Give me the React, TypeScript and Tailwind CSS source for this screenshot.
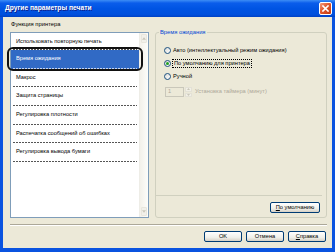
import React from "react";

const items = [
  "Использовать повторную печать",
  "Время ожидания",
  "Макрос",
  "Защита страницы",
  "Регулировка плотности",
  "Распечатка сообщений об ошибках",
  "Регулировка вывода бумаги",
];

function Dash({ light }: { light?: boolean }) {
  return (
    <div
      className={
        light
          ? "h-px mx-[2px] bg-[repeating-linear-gradient(90deg,#C8D6F0_0_2px,transparent_2px_3px)]"
          : "h-px mx-[2px] bg-[repeating-linear-gradient(90deg,#555555_0_2px,transparent_2px_3px)]"
      }
    />
  );
}

function Radio({ checked }: { checked?: boolean }) {
  return (
    <span className="w-[7px] h-[7px] shrink-0 rounded-full border border-[#1C5180] bg-[linear-gradient(135deg,#DCDCD7,#FFFFFF)] flex items-center justify-center">
      {checked && <span className="w-[3px] h-[3px] rounded-full bg-[#21A121]" />}
    </span>
  );
}

function XPButton({ children, w }: { children: React.ReactNode; w: string }) {
  return (
    <div
      className={`${w} h-[11px] rounded-[2px] border border-[#003C74] bg-[linear-gradient(180deg,#FFFFFF,#F0F0EA_60%,#D6D0C5)] flex items-center justify-center text-[5.7px] leading-none text-black`}
    >
      {children}
    </div>
  );
}

export default function App() {
  return (
    <div className="w-[335px] h-[252px] flex flex-col bg-[#0A53E0] font-['Liberation_Sans',Arial,sans-serif] overflow-hidden">
      {/* Title bar */}
      <div className="h-[17px] shrink-0 flex items-center justify-between pl-[5px] pr-[3px] bg-[linear-gradient(180deg,#3D8DF5_0%,#0A5DEB_18%,#0054E3_50%,#0050DD_85%,#0042C4_100%)]">
        <span className="text-white font-bold text-[6.7px] leading-none [text-shadow:1px_1px_0_#0F1E89]">
          Другие параметры печати
        </span>
        <div className="w-[13px] h-[13px] rounded-[2px] border border-white bg-[linear-gradient(135deg,#F39B7D,#E1572D_45%,#C13A12)] flex items-center justify-center">
          <svg width="7" height="7" viewBox="0 0 7 7">
            <path d="M1 1L6 6M6 1L1 6" stroke="white" strokeWidth="1.6" strokeLinecap="square" />
          </svg>
        </div>
      </div>

      {/* Body */}
      <div className="flex-1 mx-[3px] mb-[4px] bg-[#ECE9D8] flex flex-col pl-[7px] pr-[5px]">
        <div className="h-[201px] shrink-0 flex gap-[6px]">
          {/* Left column */}
          <div className="w-[139px] flex flex-col">
            <div className="h-[15px] pt-[3px] text-[5.8px] leading-[8px] text-black pl-[1px]">Функция принтера</div>
            <div className="relative h-[186px] border border-[#7F9DB9] bg-white flex">
              <div className="flex-1 flex flex-col">
                {items.map((t, i) => {
                  const sel = i === 1;
                  return (
                    <div
                      key={t}
                      className={`${i === 0 ? "h-[17px]" : "h-[18.67px]"} flex flex-col ${sel ? "bg-[#316AC5]" : ""}`}
                    >
                      <div
                        className={`flex-1 flex items-center pl-[5px] text-[5.7px] leading-none ${
                          sel ? "text-white" : "text-black"
                        } ${i === 0 ? "pt-[2px]" : ""}`}
                      >
                        {t}
                      </div>
                      <Dash light={sel} />
                    </div>
                  );
                })}
              </div>
              {/* scrollbar */}
              <div className="w-[9px] flex flex-col bg-[linear-gradient(90deg,#F3F1EA,#FDFDFA)] border-l border-[#EEEDE7]">
                <div className="h-[9px] m-[1px] rounded-[1px] bg-[#F1F0EA] border border-[#E8E6DD] flex items-center justify-center">
                  <svg width="5" height="3" viewBox="0 0 5 3">
                    <path d="M0 3L2.5 0L5 3Z" fill="#C9C7BA" />
                  </svg>
                </div>
                <div className="flex-1" />
                <div className="h-[9px] m-[1px] rounded-[1px] bg-[#F1F0EA] border border-[#E8E6DD] flex items-center justify-center">
                  <svg width="5" height="3" viewBox="0 0 5 3">
                    <path d="M0 0L2.5 3L5 0Z" fill="#C9C7BA" />
                  </svg>
                </div>
              </div>
              {/* callout outline around selected item */}
              <div className="absolute left-[-4px] top-[14px] w-[136px] h-[24px] border-2 border-[#111] rounded-[6px] pointer-events-none" />
            </div>
          </div>

          {/* Right group box */}
          <fieldset className="mt-[12px] w-[172px] h-[189px] border border-[#D0D0BF] rounded-[3px] px-0 pb-0 min-w-0">
            <legend className="ml-[3px] px-[1px] text-[5.8px] leading-[7px] text-[#0046D5]">Время ожидания</legend>
            <div className="h-[181px] flex flex-col">
              <div className="mt-[8px] h-[13px] flex items-center pl-[8px] gap-[2px] text-[5.7px] leading-none text-black">
                <Radio />
                <span>Авто (интеллектуальный режим ожидания)</span>
              </div>
              <div className="h-[13px] flex items-center pl-[8px] gap-[1px] text-[5.7px] leading-none text-black">
                <Radio checked />
                <span className="border border-dotted border-black px-[1px] py-[1px]">По умолчанию для принтера</span>
              </div>
              <div className="h-[13px] flex items-center pl-[8px] gap-[2px] text-[5.7px] leading-none text-black">
                <Radio />
                <span>Ручной</span>
              </div>
              <div className="mt-[4px] h-[10px] flex items-center pl-[9px]">
                <div className="w-[19px] h-[10px] border border-[#C9C7BA] bg-[#ECE9D8] flex items-center pl-[2px] text-[5.7px] leading-none text-[#ACA899]">
                  1
                </div>
                <div className="ml-[1px] w-[7px] h-[10px] flex flex-col gap-px">
                  <div className="flex-1 bg-[#F1EFE6] border border-[#E3E1D6] flex items-center justify-center">
                    <svg width="3" height="2" viewBox="0 0 3 2">
                      <path d="M0 2L1.5 0L3 2Z" fill="#C9C7BA" />
                    </svg>
                  </div>
                  <div className="flex-1 bg-[#F1EFE6] border border-[#E3E1D6] flex items-center justify-center">
                    <svg width="3" height="2" viewBox="0 0 3 2">
                      <path d="M0 0L1.5 2L3 0Z" fill="#C9C7BA" />
                    </svg>
                  </div>
                </div>
                <span className="ml-[3px] text-[5.7px] leading-none text-[#ACA899]">Установка таймера (минут)</span>
              </div>
              <div className="flex-1" />
              <div className="h-px mr-[4px] bg-[#D0D0BF]" />
              <div className="mt-[6px] mb-[4px] flex justify-end pr-[6px]">
                <XPButton w="w-[50px]">
                  <span>
                    <span className="underline">П</span>о умолчанию
                  </span>
                </XPButton>
              </div>
            </div>
          </fieldset>
        </div>

        {/* etched separator */}
        <div className="mt-[6px] h-px bg-[#ACA899]" />
        <div className="h-px bg-white" />

        {/* bottom buttons */}
        <div className="mt-[5px] flex justify-end gap-[4px] pr-[1px]">
          <XPButton w="w-[38px]">OK</XPButton>
          <XPButton w="w-[38px]">Отмена</XPButton>
          <XPButton w="w-[38px]">
            <span>
              <span className="underline">С</span>правка
            </span>
          </XPButton>
        </div>
      </div>
    </div>
  );
}
